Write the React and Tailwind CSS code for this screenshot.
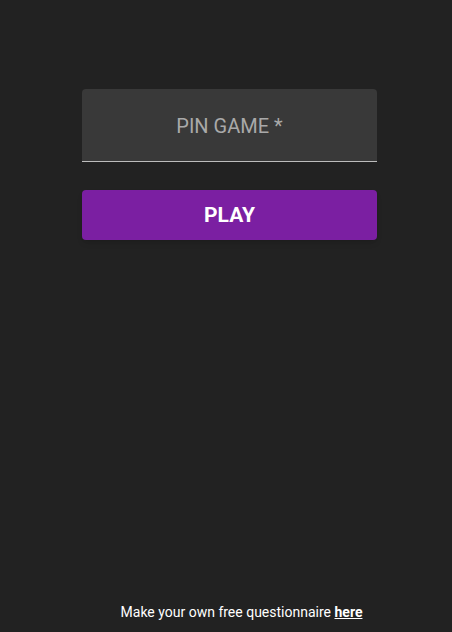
export default function App() {
  return (
    <div className="flex h-[632px] flex-col bg-[#222222] font-['Roboto',sans-serif]">
      <div className="ml-[82px] mt-[89px] w-[295px]">
        <div className="flex h-[73px] items-center justify-center rounded-t-[4px] border-b border-[#bdbdbd] bg-[#393939] pt-[2px]">
          <span className="text-[20px] text-[#a9a9a9]">PIN GAME *</span>
        </div>
        <button
          type="button"
          className="mt-[28px] flex h-[50px] w-full items-center justify-center rounded-[4px] bg-[#7b1fa2] pt-[2px] text-[21px] font-bold text-white shadow-md"
        >
          PLAY
        </button>
      </div>
      <div className="mt-auto pb-[9px] pl-[31px] text-center text-[14px] text-white">
        Make your own free questionnaire <a className="font-bold underline">here</a>
      </div>
    </div>
  );
}
